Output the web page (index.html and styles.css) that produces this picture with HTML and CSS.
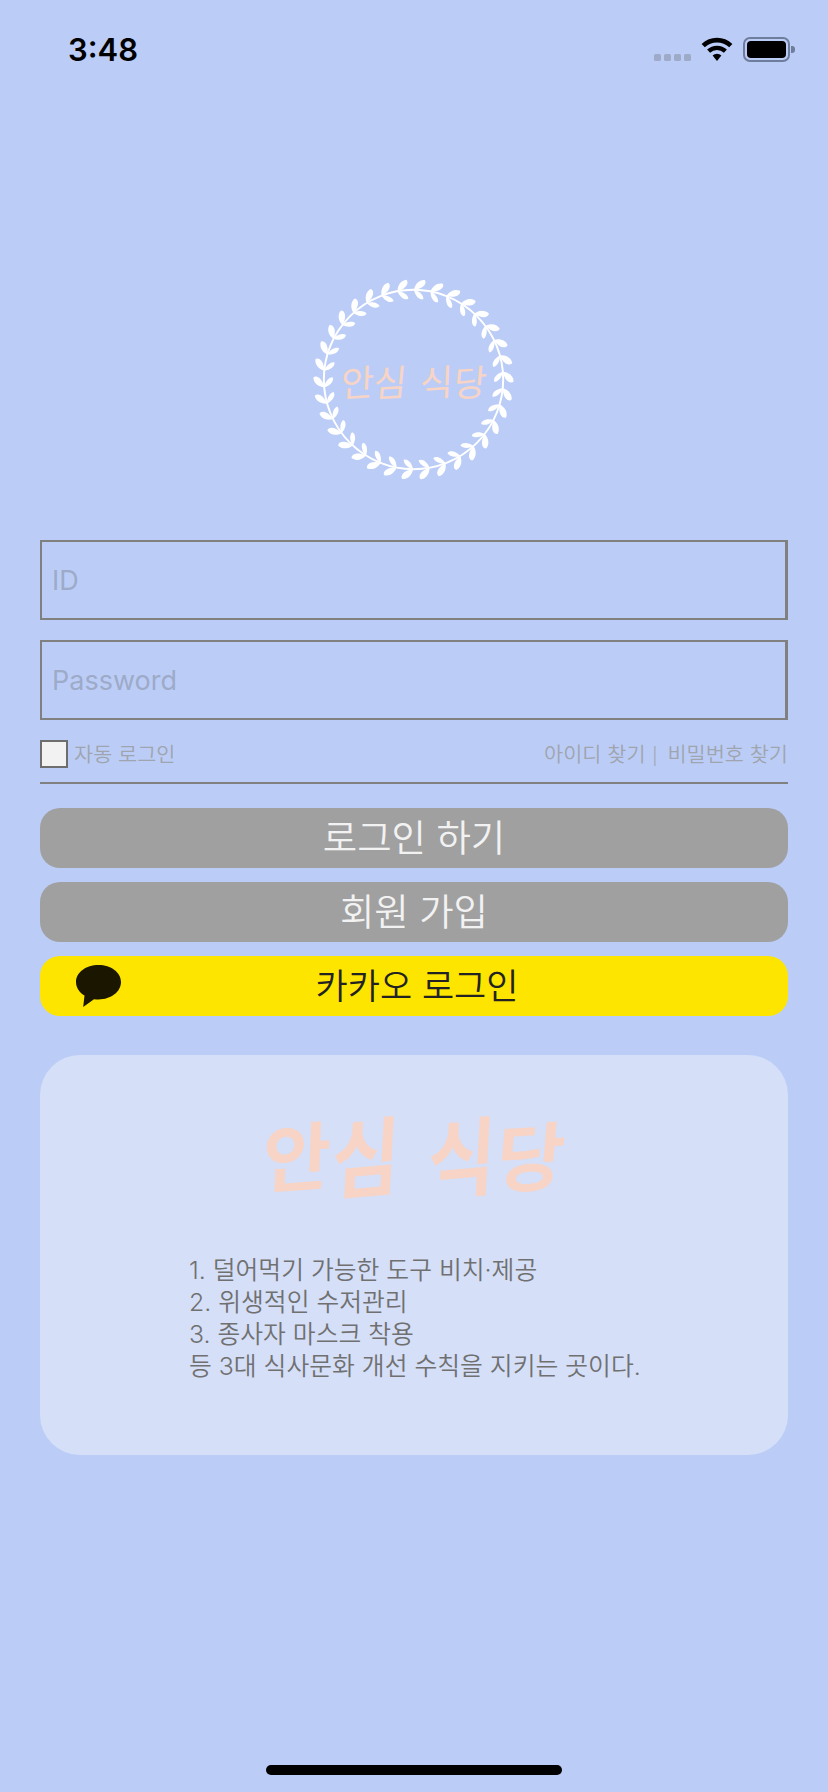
FILE: index.html
```html
<!DOCTYPE html>
<html lang="ko">
<head>
<meta charset="utf-8">
<title>안심 식당</title>
<link rel="stylesheet" href="styles.css">
</head>
<body>
<div class="page">
  <header class="status">
    <span class="time">3:48</span>
    <div class="status-icons">
      <div class="dots"><i></i><i></i><i></i><i></i></div>
      <svg class="wifi" viewBox="0 0 32 24" width="32" height="24">
        <path d="M2.2 8.6a20 20 0 0 1 27.6 0" fill="none" stroke="#000" stroke-width="4.6"/>
        <path d="M7.6 14.2a12.4 12.4 0 0 1 16.8 0" fill="none" stroke="#000" stroke-width="4.4"/>
        <path d="M11.6 18.4a6.4 6.4 0 0 1 8.8 0L16 24z" fill="#000"/>
      </svg>
      <div class="battery"><div class="battery-fill"></div></div>
    </div>
  </header>

  <div class="logo">
    <svg class="wreath" viewBox="0 0 230 220" width="230" height="220">
      <defs>
        <g id="pair">
          <path d="M115 19.5C116 13.5 120.500 9 126 9.500C128.500 12.500 125 18.500 115 19.500Z"/>
          <path d="M115 19.500C120.500 20.500 125 25.500 124.500 29C120.500 30.500 116 25.500 115 19.500Z"/>
        </g>
      </defs>
      <g transform="translate(2.3 0.7) scale(0.98)">
      <circle class="stem" cx="114.5" cy="111" r="91.5"/>
      <g class="leaves">
        <use href="#pair" transform="rotate(0 114.5 111)"/>
        <use href="#pair" transform="rotate(10.59 114.5 111)"/>
        <use href="#pair" transform="rotate(21.18 114.5 111)"/>
        <use href="#pair" transform="rotate(31.76 114.5 111)"/>
        <use href="#pair" transform="rotate(42.35 114.5 111)"/>
        <use href="#pair" transform="rotate(52.94 114.5 111)"/>
        <use href="#pair" transform="rotate(63.53 114.5 111)"/>
        <use href="#pair" transform="rotate(74.12 114.5 111)"/>
        <use href="#pair" transform="rotate(84.71 114.5 111)"/>
        <use href="#pair" transform="rotate(95.29 114.5 111)"/>
        <use href="#pair" transform="rotate(105.88 114.5 111)"/>
        <use href="#pair" transform="rotate(116.47 114.5 111)"/>
        <use href="#pair" transform="rotate(127.06 114.5 111)"/>
        <use href="#pair" transform="rotate(137.65 114.5 111)"/>
        <use href="#pair" transform="rotate(148.24 114.5 111)"/>
        <use href="#pair" transform="rotate(158.82 114.5 111)"/>
        <use href="#pair" transform="rotate(169.41 114.5 111)"/>
        <use href="#pair" transform="rotate(180 114.5 111)"/>
        <use href="#pair" transform="rotate(190.59 114.5 111)"/>
        <use href="#pair" transform="rotate(201.18 114.5 111)"/>
        <use href="#pair" transform="rotate(211.76 114.5 111)"/>
        <use href="#pair" transform="rotate(222.35 114.5 111)"/>
        <use href="#pair" transform="rotate(232.94 114.5 111)"/>
        <use href="#pair" transform="rotate(243.53 114.5 111)"/>
        <use href="#pair" transform="rotate(254.12 114.5 111)"/>
        <use href="#pair" transform="rotate(264.71 114.5 111)"/>
        <use href="#pair" transform="rotate(275.29 114.5 111)"/>
        <use href="#pair" transform="rotate(285.88 114.5 111)"/>
        <use href="#pair" transform="rotate(296.47 114.5 111)"/>
        <use href="#pair" transform="rotate(307.06 114.5 111)"/>
        <use href="#pair" transform="rotate(317.65 114.5 111)"/>
        <use href="#pair" transform="rotate(328.24 114.5 111)"/>
        <use href="#pair" transform="rotate(338.82 114.5 111)"/>
        <use href="#pair" transform="rotate(349.41 114.5 111)"/>
      </g>
      </g>
    </svg>
    <div class="logo-title"><span class="tilt-a">안</span><span class="tilt-b">심</span><span class="word-gap tilt-a">식</span><span class="tilt-b">당</span></div>
  </div>

  <main class="form">
    <input class="field" type="text" placeholder="ID">
    <input class="field" type="password" placeholder="Password">
    <div class="options">
      <label class="auto"><span class="checkbox"></span><span>자동 로그인</span></label>
      <div class="links"><span>아이디 찾기</span><span class="sep">|</span><span>비밀번호 찾기</span></div>
    </div>
    <hr class="rule">
    <div class="buttons">
      <button class="btn btn-grey">로그인 하기</button>
      <button class="btn btn-grey">회원 가입</button>
      <button class="btn btn-kakao">
        <svg class="kakao-icon" viewBox="0 0 45 42" width="45" height="42">
          <path d="M22.5 0C10 0 0 7.4 0 17C0 23 4 28 8.5 30.5L7.2 42L18 34.2C19.5 34.4 21 34.4 22.5 34.4C35 34.4 45 26.8 45 17C45 7.4 35 0 22.5 0Z" fill="#1a1600"/>
        </svg>
        <span>카카오 로그인</span>
      </button>
    </div>
    <section class="card">
      <h1 class="card-title"><span class="tilt-a">안</span><span class="tilt-b tall">심</span><span class="word-gap tilt-a tall">식</span><span class="tilt-b">당</span></h1>
      <p class="card-text">1. 덜어먹기 가능한 도구 비치·제공<br>2. 위생적인 수저관리<br>3. 종사자 마스크 착용<br>등 3대 식사문화 개선 수칙을 지키는 곳이다.</p>
    </section>
  </main>

  <div class="home-bar"></div>
</div>
</body>
</html>
```

FILE: styles.css
```css
* { box-sizing: border-box; }
html, body { margin: 0; padding: 0; }
body {
  background: #bbcdf7;
  font-family: "Noto Sans CJK KR", "Noto Sans", sans-serif;
}
.page {
  width: 828px;
  height: 1792px;
  display: flex;
  flex-direction: column;
  overflow: hidden;
}
.status {
  height: 88px;
  display: flex;
  justify-content: space-between;
  padding: 37px 38px 0 68px;
}
.time {
  font-family: Inter, "Liberation Sans", sans-serif;
  font-weight: 600;
  font-size: 31px;
  line-height: 26px;
  color: #000;
}
.status-icons {
  display: flex;
  align-items: flex-start;
}
.dots { display: flex; gap: 3px; margin-top: 17px; margin-right: 10px; }
.dots i {
  width: 7px;
  height: 7px;
  border-radius: 1.5px;
  background: #9dabc9;
}
.wifi { margin-right: 10px; }
.battery {
  position: relative;
  width: 47px;
  height: 25px;
  border: 2px solid #6f7d9c;
  border-radius: 7px;
  padding: 2px;
}
.battery::after {
  content: "";
  position: absolute;
  right: -7px;
  top: 7px;
  width: 4px;
  height: 7px;
  background: #6f7d9c;
  border-radius: 0 3px 3px 0;
}
.battery-fill {
  width: 100%;
  height: 100%;
  background: #000;
  border-radius: 4px;
}

.logo {
  display: grid;
  justify-items: center;
  align-items: center;
  height: 220px;
  margin-top: 182px;
  margin-bottom: 50px;
}
.wreath, .logo-title { grid-area: 1 / 1; }
.stem { fill: none; stroke: #fff; stroke-width: 2; }
.leaves { fill: #fff; }
.logo-title {
  display: flex;
  font-weight: 400;
  font-size: 36px;
  line-height: 40px;
  color: #f7d4c6;
}
.tilt-a { display: inline-block; transform: rotate(-4deg) skewX(-6deg); }
.tilt-b { display: inline-block; transform: rotate(-3deg) skewX(-8deg); }
.word-gap { margin-left: 0.36em; }

.form {
  display: flex;
  flex-direction: column;
  padding: 0 40px;
}
.field {
  display: block;
  width: 748px;
  height: 80px;
  margin: 0 0 20px;
  padding: 0 10px;
  background: transparent;
  border: solid #808080;
  border-width: 2px 3px 2px 2px;
  border-radius: 0;
  outline: none;
  font-family: Inter, "Noto Sans", sans-serif;
  font-size: 27px;
}
.field::placeholder { color: #9daac8; opacity: 1; }
.options {
  display: flex;
  justify-content: space-between;
  align-items: center;
  height: 28px;
  font-size: 20.8px;
  line-height: 24px;
  font-weight: 350;
  color: #a0a4ae;
}
.auto { display: flex; align-items: center; gap: 6px; }
.auto span:last-child, .links { margin-top: -3px; }
.checkbox {
  width: 28px;
  height: 28px;
  background: #f2f2f2;
  border: 2px solid #6e6e6e;
}
.links { display: flex; gap: 7px; }
.sep { margin-right: 3px; font-size: 18px; }
.rule {
  width: 100%;
  height: 2px;
  margin: 14px 0 0;
  border: 0;
  background: #808080;
}
.buttons {
  display: flex;
  flex-direction: column;
  gap: 14px;
  margin-top: 24px;
}
.btn {
  position: relative;
  display: flex;
  align-items: center;
  justify-content: center;
  width: 100%;
  height: 60px;
  border: 0;
  padding: 0 0 4px;
  border-radius: 20px;
  font-family: inherit;
  font-size: 37.4px;
  font-weight: 350;
  line-height: 52px;
}
.btn-grey { background: #a0a0a0; color: #f2f2f2; }
.btn-kakao { padding-left: 6px; background: #fee500; color: #222; font-size: 35px; }
.kakao-icon { position: absolute; left: 36px; top: 9px; }
.card {
  height: 400px;
  margin-top: 39px;
  border-radius: 40px;
  background: #d5dff8;
  display: flex;
  flex-direction: column;
}
.card-title {
  display: flex;
  justify-content: center;
  gap: 1px;
  margin: 48px 0 0;
  font-size: 74px;
  line-height: 100px;
  font-weight: 700;
  color: #f7d4c6;
}
.tall { transform: rotate(-5deg) skewX(-8deg) scaleY(1.15); }
.card-text {
  margin: 51px 0 0 149px;
  font-family: Inter, "Noto Sans CJK KR", sans-serif;
  font-size: 24.8px;
  line-height: 32px;
  font-weight: 350;
  color: #707070;
}
.home-bar {
  width: 296px;
  height: 10px;
  margin: auto auto 17px;
  background: #000;
  border-radius: 5px;
}
```
